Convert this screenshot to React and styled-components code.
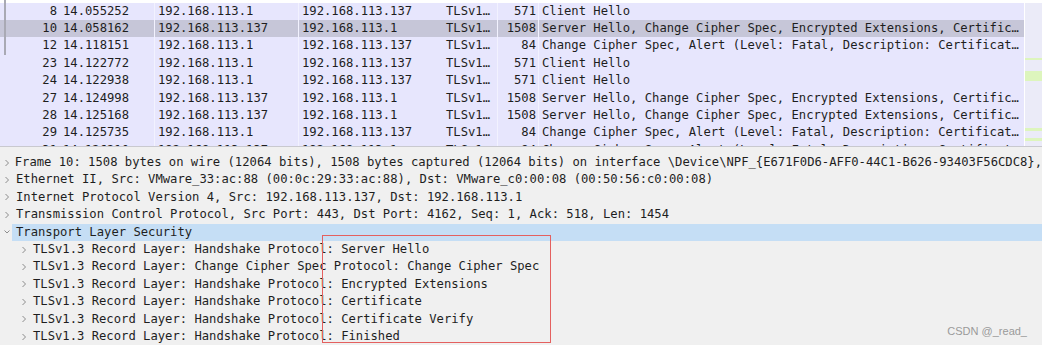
import React from "react";
import styled, { createGlobalStyle } from "styled-components";

const GlobalStyle = createGlobalStyle`
  html, body {
    margin: 0;
    padding: 0;
    background: #f0f0f0;
  }
  body {
    width: 1042px;
    height: 345px;
    overflow: hidden;
    font-family: "DejaVu Sans Mono", "Liberation Mono", monospace;
    font-size: 12.2px;
    color: #1e1e1e;
  }
`;

const INFO_SH = "Server Hello, Change Cipher Spec, Encrypted Extensions, Certific…";
const INFO_AL = "Change Cipher Spec, Alert (Level: Fatal, Description: Certificat…";
const A = "192.168.113.1";
const B = "192.168.113.137";

const packets = [
  { no: 8, time: "14.055252", src: A, dst: B, len: 571, info: "Client Hello", related: true },
  { no: 10, time: "14.058162", src: B, dst: A, len: 1508, info: INFO_SH, related: true, selected: true },
  { no: 12, time: "14.118151", src: A, dst: B, len: 84, info: INFO_AL, related: true },
  { no: 23, time: "14.122772", src: A, dst: B, len: 571, info: "Client Hello" },
  { no: 24, time: "14.122938", src: A, dst: B, len: 571, info: "Client Hello" },
  { no: 27, time: "14.124998", src: B, dst: A, len: 1508, info: INFO_SH },
  { no: 28, time: "14.125168", src: B, dst: A, len: 1508, info: INFO_SH },
  { no: 29, time: "14.125735", src: A, dst: B, len: 84, info: INFO_AL },
  { no: 31, time: "14.126210", src: B, dst: A, len: 84, info: INFO_AL },
];

const marks = [
  { top: 55, height: 2 },
  { top: 68, height: 10 },
  { top: 125, height: 3 },
  { top: 135, height: 3 },
];

const details = [
  { level: 0, text: "Frame 10: 1508 bytes on wire (12064 bits), 1508 bytes captured (12064 bits) on interface \\Device\\NPF_{E671F0D6-AFF0-44C1-B626-93403F56CDC8}," },
  { level: 0, text: "Ethernet II, Src: VMware_33:ac:88 (00:0c:29:33:ac:88), Dst: VMware_c0:00:08 (00:50:56:c0:00:08)" },
  { level: 0, text: "Internet Protocol Version 4, Src: 192.168.113.137, Dst: 192.168.113.1" },
  { level: 0, text: "Transmission Control Protocol, Src Port: 443, Dst Port: 4162, Seq: 1, Ack: 518, Len: 1454" },
  { level: 0, text: "Transport Layer Security", open: true, selected: true },
  { level: 1, text: "TLSv1.3 Record Layer: Handshake Protocol: Server Hello" },
  { level: 1, text: "TLSv1.3 Record Layer: Change Cipher Spec Protocol: Change Cipher Spec" },
  { level: 1, text: "TLSv1.3 Record Layer: Handshake Protocol: Encrypted Extensions" },
  { level: 1, text: "TLSv1.3 Record Layer: Handshake Protocol: Certificate" },
  { level: 1, text: "TLSv1.3 Record Layer: Handshake Protocol: Certificate Verify" },
  { level: 1, text: "TLSv1.3 Record Layer: Handshake Protocol: Finished" },
];

const Chevron = ({ open }) => (
  <svg width="6" height="8" viewBox="0 0 6 8">
    {open ? (
      <path d="M0.5 2.5 L3 5 L5.5 2.5" fill="none" stroke="#8c8c8c" strokeWidth="1" />
    ) : (
      <path d="M1.5 1 L4.5 4 L1.5 7" fill="none" stroke="#8c8c8c" strokeWidth="1" />
    )}
  </svg>
);

const App = () => {
  return (
    <Page>
      <GlobalStyle />
      <PacketPane>
        <PacketList>
          {packets.map((p) => (
            <Row key={p.no} selected={p.selected}>
              <NoCell related={p.related}>{p.no}</NoCell>
              <Cell divider>{p.time}</Cell>
              <Cell divider>{p.src}</Cell>
              <Cell>{p.dst}</Cell>
              <Cell divider>TLSv1…</Cell>
              <LenCell>{p.len}</LenCell>
              <Cell>{p.info}</Cell>
            </Row>
          ))}
        </PacketList>
        <Minimap>
          {marks.map((m, i) => (
            <Mark key={i} style={{ top: m.top, height: m.height }} />
          ))}
        </Minimap>
      </PacketPane>

      <DetailPane>
        {details.map((d, i) => (
          <TreeRow key={i} level={d.level}>
            <Toggle>
              <Chevron open={d.open} />
            </Toggle>
            <Label selected={d.selected}>{d.text}</Label>
          </TreeRow>
        ))}
      </DetailPane>

      <Highlight />
      <Watermark>CSDN @_read_</Watermark>
    </Page>
  );
};

const Page = styled.div`
  position: relative;
  width: 1042px;
  height: 345px;
  display: flex;
  flex-direction: column;
  background: #f0f0f0;
`;

const PacketPane = styled.div`
  display: flex;
  height: 147px;
  flex-shrink: 0;
  background: #ffffff;
  border-bottom: 1px solid #c9c9cf;
  box-sizing: border-box;
  overflow: hidden;
`;

const PacketList = styled.div`
  width: 1025px;
  padding-top: 2.6px;
  overflow: hidden;
  border-right: 1px solid #ffffff;
  box-sizing: border-box;
`;

const Row = styled.div`
  display: grid;
  grid-template-columns: 60px 95px 144px 144px 55px 41px 1fr;
  height: 17.4px;
  line-height: 17.4px;
  background: ${({ selected }) => (selected ? "#c6c6d8" : "#e7e6fd")};
  white-space: nowrap;
`;

const Cell = styled.div`
  padding-left: 3px;
  overflow: hidden;
  border-right: 1px solid ${({ divider }) => (divider ? "#f2f2ff" : "transparent")};
`;

const NoCell = styled.div`
  position: relative;
  text-align: right;
  padding-right: 3px;
  &::before {
    content: "";
    display: ${({ related }) => (related ? "block" : "none")};
    position: absolute;
    left: 4px;
    top: -3px;
    bottom: 0;
    width: 2px;
    background: #a9a9b4;
  }
`;

const LenCell = styled.div`
  text-align: right;
  padding-right: 2px;
  border-right: 1px solid #f2f2ff;
`;

const Minimap = styled.div`
  position: relative;
  flex: 1;
  margin-top: 3px;
  background: #ebebf8;
`;

const Mark = styled.div`
  position: absolute;
  left: 0;
  right: 0;
  background: #ddf5bd;
`;

const DetailPane = styled.div`
  flex: 1;
  padding-top: 7px;
  overflow: hidden;
`;

const TreeRow = styled.div`
  display: flex;
  align-items: center;
  height: 17.4px;
  padding-left: ${({ level }) => level * 17 + 2}px;
  white-space: nowrap;
`;

const Toggle = styled.div`
  width: 10px;
  padding-left: 2px;
  box-sizing: border-box;
  display: flex;
  align-items: center;
`;

const Label = styled.div`
  flex: 1;
  height: 100%;
  line-height: 17.4px;
  padding-left: 4px;
  background: ${({ selected }) => (selected ? "#c5def5" : "transparent")};
`;

const Highlight = styled.div`
  position: absolute;
  left: 322px;
  top: 235px;
  width: 229px;
  height: 108px;
  border: 1.5px solid #e4605f;
  box-sizing: border-box;
`;

const Watermark = styled.div`
  position: absolute;
  right: 15px;
  bottom: 8px;
  font-family: "Liberation Sans", Arial, sans-serif;
  font-size: 11px;
  color: #9a9a9a;
`;

export default App;
